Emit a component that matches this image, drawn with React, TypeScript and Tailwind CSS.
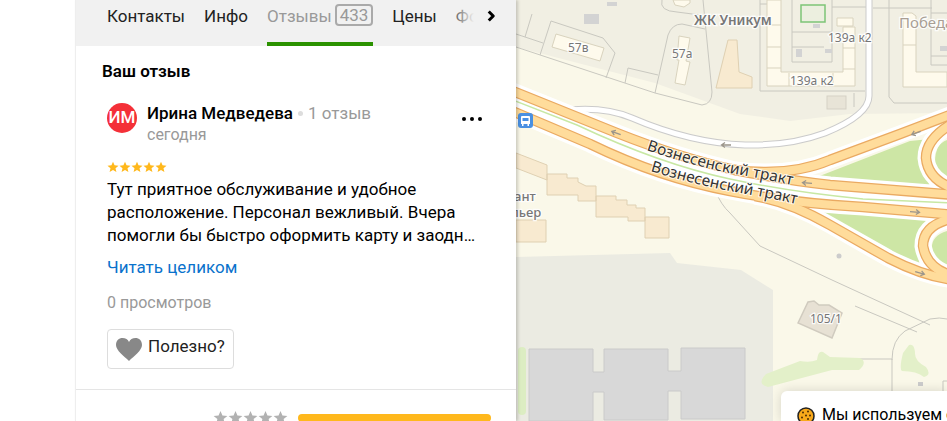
import React from "react";
import { ChevronRight } from "lucide-react";

const STAR = "M12 1.5l3.1 7.2 7.9.7-6 5.1 1.8 7.7L12 18.1l-6.8 4.1L7 14.5 1 9.4l7.9-.7z";

function Stars({ size, className }: { size: "sm" | "md"; className: string }) {
  const box = size === "sm" ? "size-3" : "size-[15px]";
  return (
    <span className={`flex ${className}`} role="img" aria-label="5 звёзд">
      {[1, 2, 3, 4, 5].map((n) => (
        <svg key={n} viewBox="0 0 24 24" className={box} fill="currentColor">
          <path d={STAR} />
        </svg>
      ))}
    </span>
  );
}

function Tabs() {
  const tab = "flex h-[46px] shrink-0 items-start border-b-4 pt-1 text-[17px] leading-6";
  return (
    <nav className="relative flex h-[46px] bg-[#f1f1f1]">
      <div className="flex min-w-0 flex-1 gap-[19px] overflow-hidden pl-[31px] whitespace-nowrap text-[#222]">
        <button className={`${tab} border-transparent`}>Контакты</button>
        <button className={`${tab} border-transparent`}>Инфо</button>
        <button className={`${tab} gap-[3px] border-[#2b9200] text-[#999]`}>
          Отзывы
          <span className="rounded border-2 border-[#aaa] px-[3px] leading-[18px]">433</span>
        </button>
        <button className={`${tab} border-transparent`}>Цены</button>
        <button className={`${tab} border-transparent`}>Фото</button>
      </div>
      <div className="absolute inset-y-0 right-0 flex w-[70px] bg-linear-to-r from-[#f1f1f1]/0 to-[#f1f1f1] to-40%">
        <button aria-label="Дальше" className="ml-auto flex w-[50px] items-start justify-center pt-[7px] text-black">
          <ChevronRight size={18} strokeWidth={4} strokeLinecap="butt" />
        </button>
      </div>
    </nav>
  );
}

function Review() {
  return (
    <article className="flex flex-col items-start pt-3 pr-5 pb-5 pl-[31px]">
      <header className="flex w-full items-start">
        <span className="mt-2 flex size-[30px] shrink-0 items-center justify-center rounded-full bg-[#f43038] text-[17px] font-medium text-white">
          ИМ
        </span>
        <div className="ml-2.5 min-w-0 flex-1 pt-1.5">
          <div className="flex items-center gap-[5px] text-[17px] leading-6 whitespace-nowrap">
            <h3 className="font-medium text-black">Ирина Медведева</h3>
            <span className="size-[5px] rounded-full bg-[#ddd]" />
            <span className="text-[#999]">1 отзыв</span>
          </div>
          <p className="text-base leading-5 text-[#999]">сегодня</p>
        </div>
        <button aria-label="Меню" className="mt-3 mr-3 flex h-6 w-6 items-center justify-center gap-1">
          <i className="size-1 rounded-full bg-black" />
          <i className="size-1 rounded-full bg-black" />
          <i className="size-1 rounded-full bg-black" />
        </button>
      </header>
      <Stars size="sm" className="mt-4 text-[#ffb81c]" />
      <p className="mt-[5px] w-full text-[17px] leading-[23px] text-black">
        Тут приятное обслуживание и удобное расположение. Персонал вежливый. Вчера помогли бы быстро оформить
        карту и заодн…
      </p>
      <a href="#review" className="mt-2 text-[17px] leading-6 text-[#0a72cc]">
        Читать целиком
      </a>
      <p className="mt-3 text-base leading-6 text-[#999]">0 просмотров</p>
      <button className="mt-[14px] flex h-10 items-center gap-1.5 rounded border border-[#ddd] px-2 pb-1 text-[17px] text-[#222]">
        <svg viewBox="0 0 26 23" className="mt-1 h-[23px] w-[26px]" fill="#888">
          <path d="M13 23C8 18 0 12.500 0 7C0 2.500 3 0 6.500 0C9.500 0 12 1.500 13 4C14 1.500 16.500 0 19.500 0C23 0 26 2.500 26 7C26 12.500 18 18 13 23Z" />
        </svg>
        Полезно?
      </button>
    </article>
  );
}

const UPPER = "M505 88L617 133Q680 158 735 170Q785 180 830 185Q890 190 955 195";
const LOWER = "M505 108L590 144Q660 178 730 191Q790 203 863 207L955 215";
const RAMP_UP = "M735 170Q790 177 830 160L900 134L955 113";
const RAMP_DOWN = "M755 196Q790 202 830 225L888 258Q925 277 955 280";
const LOOP_TOP = "M955 122Q926 138 926 158Q928 180 955 189";
const LOOP_BOTTOM = "M955 218Q923 224 923 246Q927 270 955 276";
const HIGHWAYS = [LOOP_TOP, LOOP_BOTTOM, RAMP_UP, RAMP_DOWN, UPPER, LOWER];
const MEDIAN = "M505 97L577 125Q660 164 730 179Q790 192 863 199L955 203";
const STREET = "M571 110Q605 107 632 118Q690 143 745 145Q790 146 825 133Q869 115 869 96L869-5";

function Arrow({ x, y, angle }: { x: number; y: number; angle: number }) {
  return (
    <path
      d="M-5 0H4M1-2.500L4.500 0L1 2.500"
      transform={`translate(${x} ${y}) rotate(${angle})`}
      fill="none"
      stroke="#9b958b"
      strokeWidth="1.300"
    />
  );
}

function MapView() {
  return (
    <svg
      viewBox="516 0 431 421"
      preserveAspectRatio="xMinYMin slice"
      className="block h-full w-full font-['Noto_Sans',sans-serif]"
      role="img"
      aria-label="Карта"
    >
      <rect x="516" width="431" height="421" fill="#faf8e9" />
      <path d="M516 0H947V113L850 114L790 121L740 114L655 83L516 47Z" fill="#f1efe3" />

      <g fill="none" stroke="#c9c8c0">
        <path d="M516 34L543 43M532 14L525 37M540 55L551 21L603 38L615 53L606 78M516 47L655 93M625 83L628 68L658 75M655 93L668 35Q672 24 682 24L705 29M703 0L712 92Q712 104 702 105L655 93" />
        <path d="M662 0Q659 11 677 12L700 15M760 0V91H865M760 4H781M792 0V62H832V0M792 32H832M792 47H824M832 7H867M873 8H932M889 0V97L894 103H947M931 0V65H947M931 13H947M931 56H947M854 93V107" />
        <path d="M730 213L760 246L832 280L930 325M855 306L917 332M853 359H892V391M892 360Q892 340 905 331L930 319Q940 317 947 319M943 391V381H947" />
        <path d="M715 190Q721 205 730 213" />
      </g>

      <g fill="#fefaec" stroke="#d9d3be">
        <path d="M556 34L604 48L600 61L552 47ZM679 36L690 38L686 61L690 62L685 85L675 83L679 60L677 60ZM673 0H690V3L684 7L675 5Z" />
        <path d="M767 0V86H855V27H843V72H781V0ZM837 18H853V26H837ZM767 25H781M767 47H781M767 68H781M789 73V86M833 73V86M843 48H855M843 69H855" />
        <path d="M903 13H912L916 16V72H947V87H903ZM903 45H916" />
      </g>
      <g fill="#f8ead0" stroke="#dfd0b2">
        <path d="M728 40H737L739 72L752 77V88H716Z" />
        <path d="M516 153L547 165V180L516 168ZM547 174H567V178H578V182L586 186H596V201H578V195H547ZM596 196H616V200H627V205H636V208H645V221H628V217H596ZM645 217H669V238H645ZM516 220H546V242H516Z" />
      </g>
      <g fill="#d3d3d3">
        <path d="M584 14H599V24H584ZM607 2H617V6H607ZM813 24H820V28H813ZM796 49H802V57H796ZM825 49H832V53H825ZM940 46H947V51H940Z" />
      </g>
      <rect x="801" y="5" width="24" height="17" fill="#ecefdf" stroke="#7dc577" strokeWidth="1.500" />
      <rect x="827" y="96" width="19" height="13" fill="#e8e4d7" stroke="#d5d1c5" />

      <path d="M516 257L670 253L677 263L741 270L773 290V421H516Z" fill="#ebebe2" />
      <path d="M529 349H593V372H604V349H668V371H681V348H745V419H681V391H668V420H604V392H593V421H529Z" fill="#d8d8d8" stroke="#cacaca" />
      <rect x="518" y="347" width="8" height="68" rx="4" fill="#dcedc2" />
      <path d="M766 374L800 361Q810 363 817 360Q818 350 823 352L830 357L860 358Q868 362 859 370H832L768 387Q756 384 766 374ZM909 345Q914 343 915 352Q914 361 926 367Q932 375 924 377Q917 371 902 371Q899 369 903 353Z" fill="#e3f0c9" />
      <path d="M798 323L808 302L814 301L819 305L829 305L842 313L832 338Z" fill="#e7e1d4" stroke="#d0cbbf" strokeWidth="1.500" />
      <circle cx="839" cy="256" r="2.500" fill="#ccc" />
      <rect x="918" y="382" width="5" height="4" fill="#ccc" />

      <path d={STREET} fill="none" stroke="#cbcbcb" strokeWidth="7" />
      <path d={STREET} fill="none" stroke="#fff" strokeWidth="5" />

      <path d="M817 177L910 141L930 139L922 163L930 187ZM818 212L930 217L916 241L920 268L885 252ZM947 140Q935 144 935 162Q938 175 947 178ZM947 231Q930 236 932 251Q936 263 947 265Z" fill="#cde6a5" />
      <path d={MEDIAN} fill="none" stroke="#fff" strokeWidth="13" />
      {HIGHWAYS.map((d) => (
        <path key={d} d={d} fill="none" stroke="#fff" strokeWidth="17" />
      ))}
      {HIGHWAYS.map((d) => (
        <path key={d} d={d} fill="none" stroke="#eaaa62" strokeWidth="10.500" />
      ))}
      {HIGHWAYS.map((d) => (
        <path key={d} d={d} fill="none" stroke="#ffdc9b" strokeWidth="8" />
      ))}
      <path d={MEDIAN} fill="none" stroke="#c8e8a4" strokeWidth="1.500" />
      <Arrow x={616} y={133} angle={200} />
      <Arrow x={807} y={183} angle={184} />
      <Arrow x={916} y={133} angle={160} />
      <Arrow x={726} y={145} angle={180} />
      <Arrow x={915} y={212} angle={4} />
      <Arrow x={920} y={273} angle={15} />

      <g transform="translate(518 113)">
        <rect width="15" height="15" rx="3" fill="#4a90e2" />
        <path d="M4 3H11Q12 3 12 4V11H11V13H9.500V11H5.500V13H4V11H3V4Q3 3 4 3ZM4.500 5V8H10.500V5Z" fill="#fff" />
      </g>

      <path id="street-north" d="M646 150Q700 168 735 174T805 188" fill="none" />
      <path id="street-south" d="M650 171Q700 186 735 192T810 207" fill="none" />
      <g fill="#333" stroke="#fff" strokeWidth="2" strokeOpacity=".8" paintOrder="stroke" fontSize="15.500">
        <text><textPath href="#street-north">Вознесенский тракт</textPath></text>
        <text><textPath href="#street-south">Вознесенский тракт</textPath></text>
      </g>
      <g fill="#777" stroke="#fff" strokeWidth="2.500" strokeOpacity=".85" paintOrder="stroke" fontSize="12">
        <text x="568" y="52">57в</text>
        <text x="672" y="58">57а</text>
        <text x="828" y="42">139а к2</text>
        <text x="790" y="85">139а к2</text>
        <text x="810" y="323">105/1</text>
        <text x="694" y="25" fontSize="13.500" fontWeight="600">ЖК Уникум</text>
        <text x="899" y="28" fontSize="15" fill="#a99f94">Победа</text>
        <text x="514" y="201" fontSize="13" fontWeight="500">ант</text>
        <text x="511" y="217" fontSize="13" fontWeight="500">льер</text>
      </g>
    </svg>
  );
}

export default function App() {
  return (
    <div className="flex h-screen overflow-hidden bg-white font-[Roboto,sans-serif]">
      <main className="z-10 ml-[75px] w-[441px] shrink-0 border-l border-[#eee] bg-white shadow-[2px_0_3px_rgba(0,0,0,0.18)]">
        <Tabs />
        <h2 className="px-[26px] pt-[13px] text-[17px] leading-6 font-semibold text-black">Ваш отзыв</h2>
        <Review />
        <section className="flex items-start gap-2.5 border-t border-[#e5e5e5] pt-5 pr-[25px] pl-[137px]">
          <Stars size="md" className="text-[#b2b2b2]" />
          <div className="mt-1 h-2 flex-1 rounded-full bg-[#ffb81c]" />
        </section>
      </main>
      <div className="relative min-w-0 flex-1">
        <MapView />
        <aside className="absolute right-0 bottom-0 left-[265px] flex h-[30px] items-start gap-[7px] overflow-hidden rounded-tl-md bg-white pt-3 pl-4 text-base leading-6 whitespace-nowrap text-black shadow-[0_0_12px_rgba(0,0,0,0.15)]">
          <svg viewBox="0 0 18 18" className="mt-1 size-[18px] shrink-0">
            <circle cx="9" cy="9" r="8" fill="#f9a91a" stroke="#222" strokeWidth="1.500" />
            <g fill="#4a2b05">
              <circle cx="6" cy="5.500" r="1" />
              <circle cx="11" cy="4.500" r="1" />
              <circle cx="9" cy="8.500" r="1" />
              <circle cx="13" cy="8.500" r="1" />
              <circle cx="5" cy="10.500" r="1" />
              <circle cx="11" cy="12" r="1" />
            </g>
          </svg>
          Мы используем cookie
        </aside>
      </div>
    </div>
  );
}
